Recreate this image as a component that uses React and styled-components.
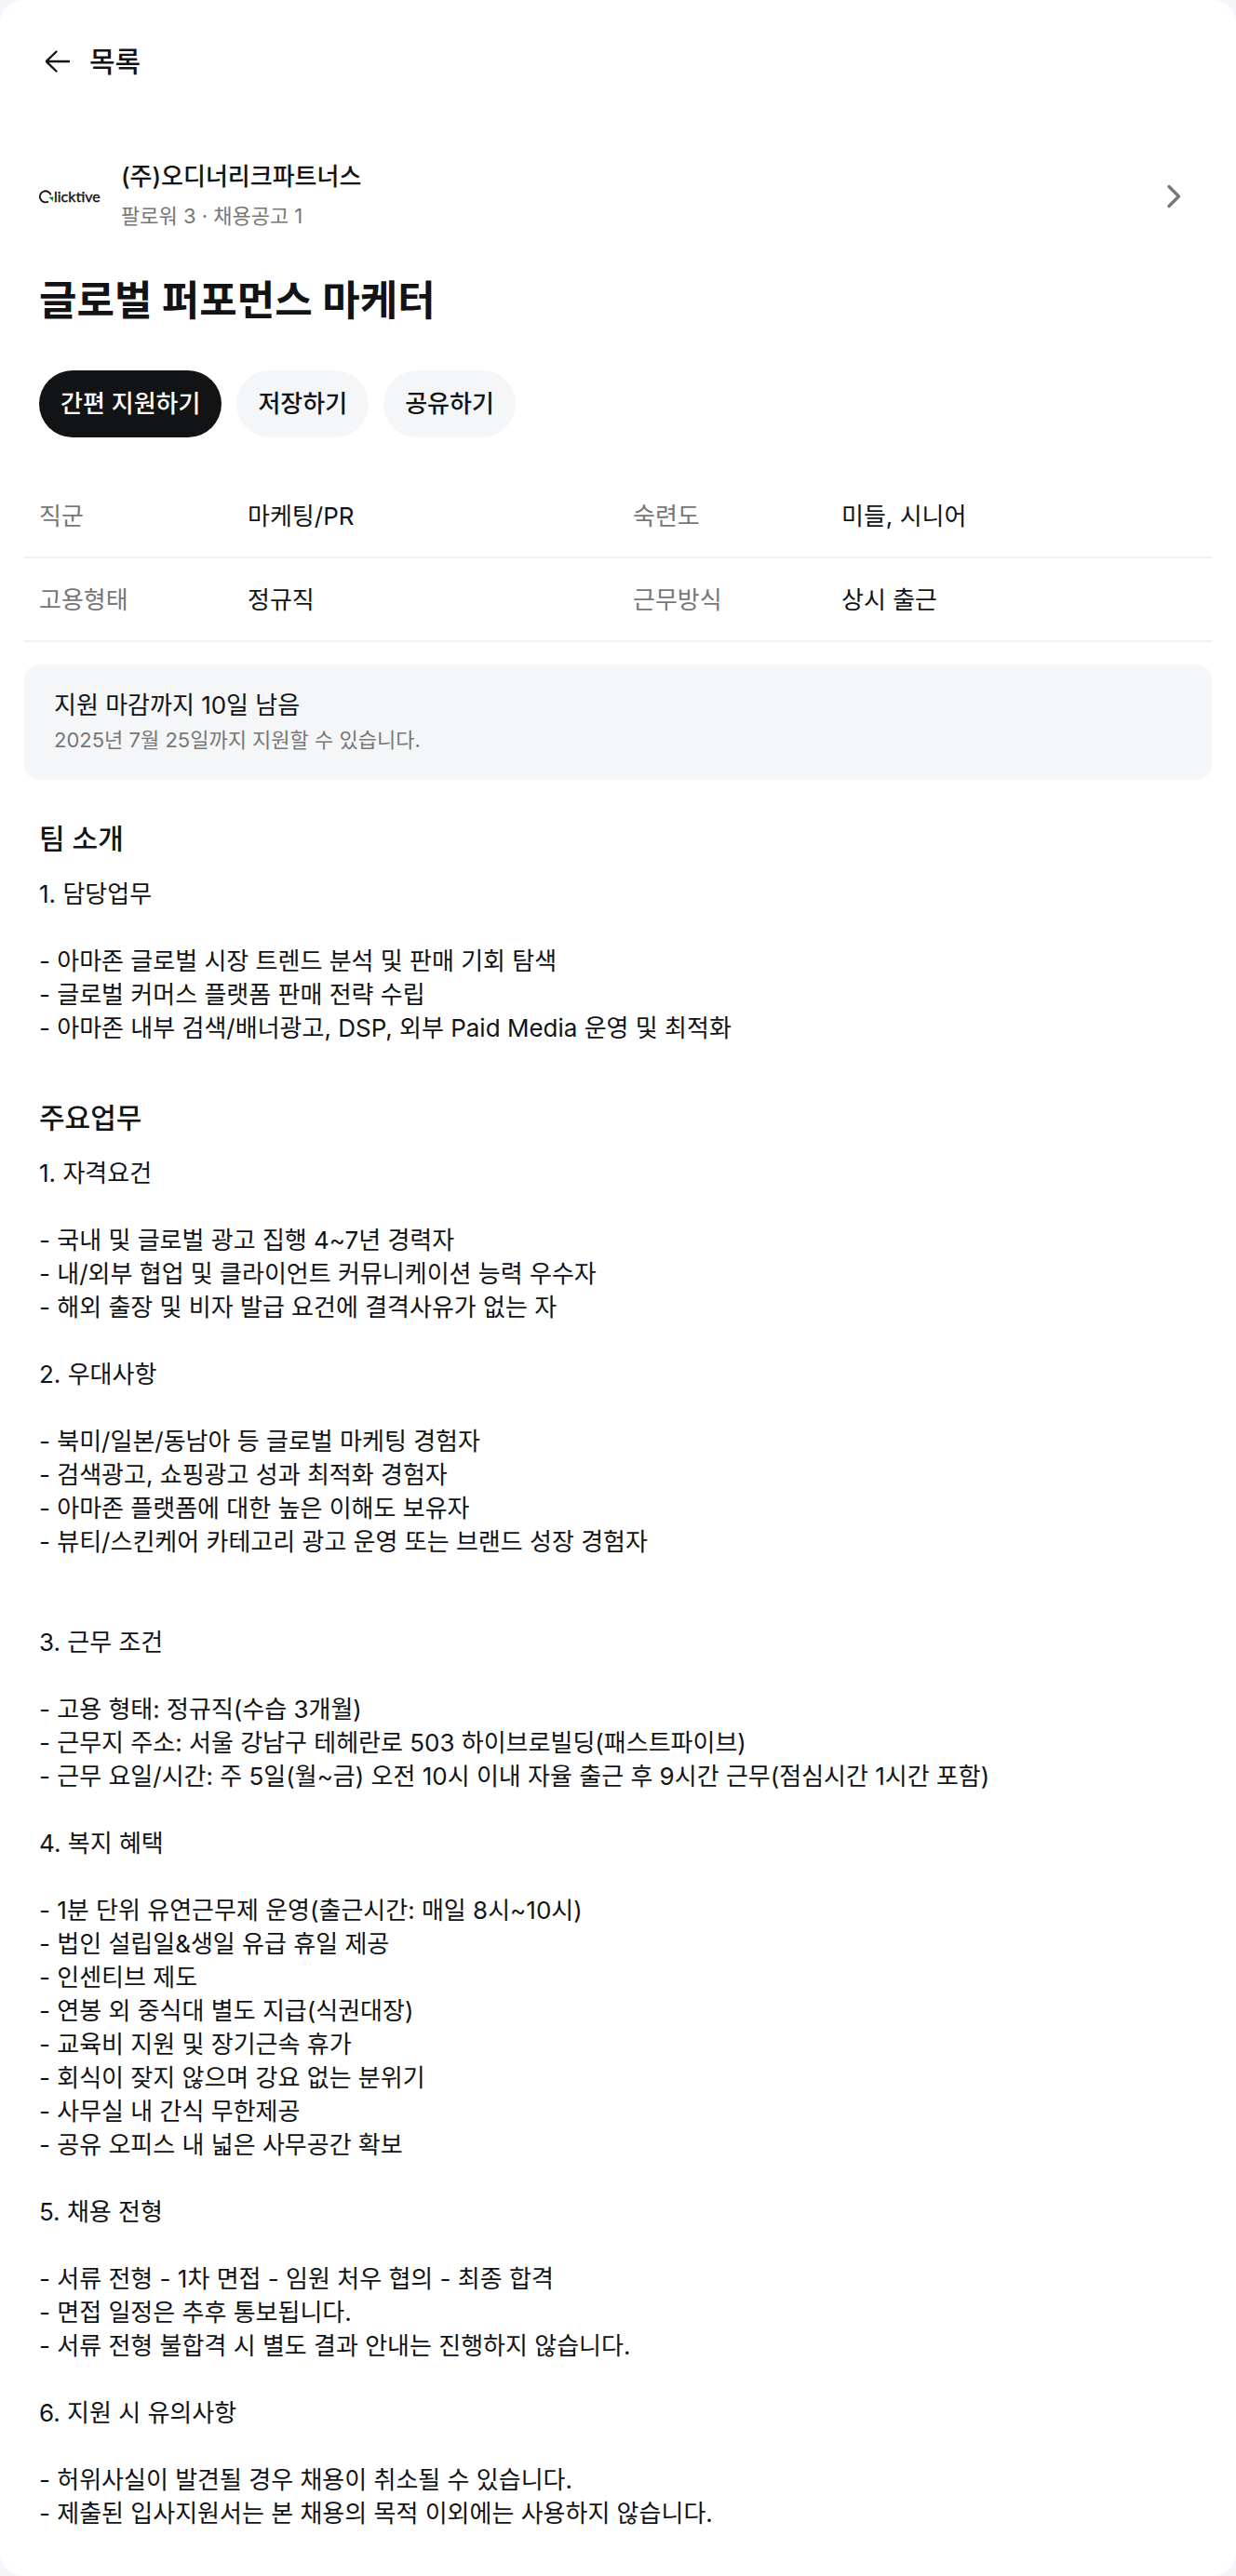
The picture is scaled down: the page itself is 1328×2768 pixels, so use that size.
import styled, { createGlobalStyle } from 'styled-components';

const facts = [
    { label: '직군', value: '마케팅/PR' },
    { label: '숙련도', value: '미들, 시니어' },
    { label: '고용형태', value: '정규직' },
    { label: '근무방식', value: '상시 출근' },
];

const sections = [
    {
        title: '팀 소개',
        body: `1. 담당업무

- 아마존 글로벌 시장 트렌드 분석 및 판매 기회 탐색
- 글로벌 커머스 플랫폼 판매 전략 수립
- 아마존 내부 검색/배너광고, DSP, 외부 Paid Media 운영 및 최적화`,
    },
    {
        title: '주요업무',
        body: `1. 자격요건

- 국내 및 글로벌 광고 집행 4~7년 경력자
- 내/외부 협업 및 클라이언트 커뮤니케이션 능력 우수자
- 해외 출장 및 비자 발급 요건에 결격사유가 없는 자

2. 우대사항

- 북미/일본/동남아 등 글로벌 마케팅 경험자
- 검색광고, 쇼핑광고 성과 최적화 경험자
- 아마존 플랫폼에 대한 높은 이해도 보유자
- 뷰티/스킨케어 카테고리 광고 운영 또는 브랜드 성장 경험자


3. 근무 조건

- 고용 형태: 정규직(수습 3개월)
- 근무지 주소: 서울 강남구 테헤란로 503 하이브로빌딩(패스트파이브)
- 근무 요일/시간: 주 5일(월~금) 오전 10시 이내 자율 출근 후 9시간 근무(점심시간 1시간 포함)

4. 복지 혜택

- 1분 단위 유연근무제 운영(출근시간: 매일 8시~10시)
- 법인 설립일&생일 유급 휴일 제공
- 인센티브 제도
- 연봉 외 중식대 별도 지급(식권대장)
- 교육비 지원 및 장기근속 휴가
- 회식이 잦지 않으며 강요 없는 분위기
- 사무실 내 간식 무한제공
- 공유 오피스 내 넓은 사무공간 확보

5. 채용 전형

- 서류 전형 - 1차 면접 - 임원 처우 협의 - 최종 합격
- 면접 일정은 추후 통보됩니다.
- 서류 전형 불합격 시 별도 결과 안내는 진행하지 않습니다.

6. 지원 시 유의사항

- 허위사실이 발견될 경우 채용이 취소될 수 있습니다.
- 제출된 입사지원서는 본 채용의 목적 이외에는 사용하지 않습니다.`,
    },
];

function ArrowIcon() {
    return (
        <svg width="40" height="40" viewBox="0 0 40 40" fill="none" stroke="currentColor" strokeWidth="2.4" strokeLinecap="round" strokeLinejoin="round" aria-hidden="true">
            <path d="M32 20H8M18.500 9.500L8.500 19.200Q7.700 20 8.500 20.800L18.500 30.500" />
        </svg>
    );
}

function ChevronIcon() {
    return (
        <svg width="48" height="48" viewBox="0 0 48 48" fill="none" stroke="currentColor" strokeWidth="3.4" strokeLinecap="round" strokeLinejoin="round" aria-hidden="true">
            <path d="M18 13.500L28.500 24L18 34.500" />
        </svg>
    );
}

function ClicktiveLogo() {
    return (
        <svg width="64" height="64" viewBox="0 0 64 64" overflow="visible" role="img" aria-label="Clicktive">
            <path d="M12.600 30.400A6 6 0 1 0 10 37.400" fill="none" stroke="#111" strokeWidth="1.800" />
            <path d="M10.500 33L15.500 32.600L14.600 37.200L13.200 35.600Z" fill="#0b7a5c" />
            <LogoText x="16" y="38">licktive</LogoText>
        </svg>
    );
}

function App() {
    return (
        <>
            <GlobalStyle />
            <Page>
                <Header>
                    <BackLink href="#list">
                        <ArrowIcon />
                        목록
                    </BackLink>
                </Header>
                <CompanyLink href="#company">
                    <ClicktiveLogo />
                    <CompanyText>
                        <CompanyName>(주)오디너리크파트너스</CompanyName>
                        <CompanyMeta>팔로워 3 · 채용공고 1</CompanyMeta>
                    </CompanyText>
                    <ChevronIcon />
                </CompanyLink>
                <Title>글로벌 퍼포먼스 마케터</Title>
                <Actions>
                    <ActionButton type="button" $primary>간편 지원하기</ActionButton>
                    <ActionButton type="button">저장하기</ActionButton>
                    <ActionButton type="button">공유하기</ActionButton>
                </Actions>
                <Facts>
                    {facts.map(({ label, value }) => (
                        <Fact key={label}>
                            <FactLabel>{label}</FactLabel>
                            <FactValue>{value}</FactValue>
                        </Fact>
                    ))}
                </Facts>
                <Notice>
                    <NoticeTitle>지원 마감까지 10일 남음</NoticeTitle>
                    <NoticeText>2025년 7월 25일까지 지원할 수 있습니다.</NoticeText>
                </Notice>
                <Sections>
                    {sections.map(({ title, body }) => (
                        <section key={title}>
                            <SectionTitle>{title}</SectionTitle>
                            <SectionBody>{body}</SectionBody>
                        </section>
                    ))}
                </Sections>
            </Page>
        </>
    );
}

export default App;

const GlobalStyle = createGlobalStyle`
    * {
        box-sizing: border-box;
        margin: 0;
    }

    body {
        background-color: #f4f5fa;
        color: #121315;
        font-family: Inter, "Noto Sans CJK KR", sans-serif;
        font-size: 26px;
        line-height: 36px;
    }
`;

const Page = styled.main`
    background-color: #fff;
    border-radius: 24px;
    padding: 0 26px 49px;
`;

const Header = styled.header`
    display: flex;
    align-items: center;
    height: 132px;
    padding: 0 16px;
`;

const BackLink = styled.a`
    display: flex;
    align-items: center;
    gap: 14px;
    color: inherit;
    font-size: 30px;
    font-weight: 500;
    text-decoration: none;
`;

const CompanyLink = styled.a`
    display: flex;
    align-items: center;
    gap: 24px;
    padding: 37px 16px 40px;
    color: #777;
    text-decoration: none;
`;

const LogoText = styled.text`
    fill: #111;
    stroke: #111;
    stroke-width: 0.4px;
    font-family: Lato, sans-serif;
    font-size: 16px;
    font-weight: 400;
`;

const CompanyText = styled.div`
    flex: 1;
    line-height: 42px;
`;

const CompanyName = styled.p`
    color: #121315;
    font-weight: 500;
`;

const CompanyMeta = styled.p`
    font-size: 22px;
`;

const Title = styled.h1`
    padding: 0 16px;
    font-size: 44px;
    font-weight: 700;
    line-height: 60px;
`;

const Actions = styled.div`
    display: flex;
    gap: 16px;
    padding: 45px 16px 40px;
`;

const ActionButton = styled.button`
    height: 72px;
    padding: 0 23px;
    border: none;
    border-radius: 36px;
    background-color: ${({ $primary }) => ($primary ? '#121315' : '#f4f6f8')};
    color: ${({ $primary }) => ($primary ? '#fff' : '#121315')};
    font: inherit;
    font-weight: 500;
    cursor: pointer;
`;

const Facts = styled.dl`
    display: grid;
    grid-template-columns: 1fr 1fr;
`;

const Fact = styled.div`
    display: flex;
    padding: 27px 16px 25px;
    border-bottom: 2px solid #f2f2f2;
`;

const FactLabel = styled.dt`
    width: 224px;
    color: #777;
`;

const FactValue = styled.dd`
    flex: 1;
`;

const Notice = styled.aside`
    margin-top: 24px;
    padding: 25px 32px;
    border-radius: 16px;
    background-color: #f4f6f8;
`;

const NoticeTitle = styled.p`
    line-height: 38px;
`;

const NoticeText = styled.p`
    color: #777;
    font-size: 22px;
`;

const Sections = styled.div`
    display: flex;
    flex-direction: column;
    gap: 56px;
    padding: 41px 16px 0;
`;

const SectionTitle = styled.h2`
    margin-bottom: 20px;
    font-size: 30px;
    font-weight: 500;
    line-height: 44px;
`;

const SectionBody = styled.p`
    white-space: pre-line;
`;
